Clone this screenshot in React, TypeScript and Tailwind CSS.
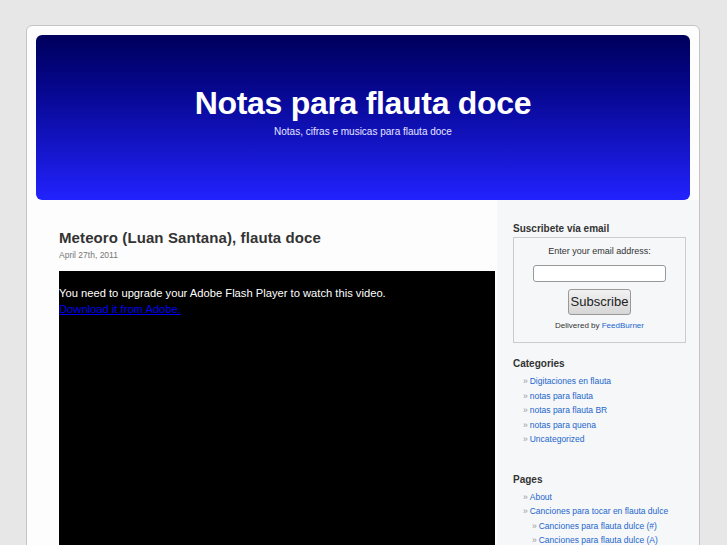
import React from "react";

const cats = ["Digitaciones en flauta", "notas para flauta", "notas para flauta BR", "notas para quena", "Uncategorized"];

export default function App() {
  return (
    <div className="h-[545px] bg-[#e7e7e7] pt-[25px] pl-[26px] overflow-hidden" style={{ fontFamily: '"Liberation Sans", Arial, sans-serif' }}>
      <div className="w-[674px] h-[560px] bg-[#fdfdfd] border border-[#c4c4c4] rounded-[6px] flex flex-col">
        <div className="mx-[9px] mt-[9px] h-[165px] rounded-[6px] bg-gradient-to-b from-[#00005c] to-[#2222ff] flex flex-col items-center">
          <div className="mt-[49px] text-white font-bold text-[32px] leading-[38px] tracking-[-0.3px]">Notas para flauta doce</div>
          <div className="mt-[4px] text-[#e6e6ff] text-[10px] leading-[12px]">Notas, cifras e musicas para flauta doce</div>
        </div>
        <div className="flex flex-1">
          <div className="w-[470px] pl-[32px] pt-[28px]">
            <div className="text-[#333] font-bold text-[15px] leading-[20px] tracking-[0.1px]">Meteoro (Luan Santana), flauta doce</div>
            <div className="text-[#777] text-[8.5px] leading-[10px] mt-[2px]">April 27th, 2011</div>
            <div className="mt-[11px] w-[436px] h-[300px] bg-black pt-[14px] text-[11.2px] leading-[16px]">
              <div className="text-white">You need to upgrade your Adobe Flash Player to watch this video.</div>
              <a className="text-[#0000ee] underline">Download it from Adobe.</a>
            </div>
          </div>
          <div className="flex-1 bg-[#f6f7f9] pl-[16px] pr-[13px] pt-[23px]">
            <div className="text-[#333] font-bold text-[10px] leading-[12px]">Suscribete vía email</div>
            <div className="mt-[2px] border border-[#cccccc] h-[106px] flex flex-col items-center pt-[7px]">
              <div className="text-[#333] text-[9px] leading-[12px]">Enter your email address:</div>
              <div className="mt-[8px] w-[133px] h-[17px] bg-white border border-[#999] rounded-[3px]" />
              <div className="mt-[7px] w-[63px] h-[26px] rounded-[3px] border border-[#999] bg-gradient-to-b from-[#f2f2f2] to-[#d6d6d6] flex items-center justify-center text-[13px] text-[#222]">Subscribe</div>
              <div className="mt-[6px] text-[8px] leading-[10px] text-[#333]">Delivered by <span className="text-[#2266cc]">FeedBurner</span></div>
            </div>
            <div className="mt-[15px] text-[#333] font-bold text-[10px] leading-[12px]">Categories</div>
            <ul className="mt-[4px] pl-[10px]">
              {cats.map((c) => (
                <li key={c} className="text-[8.5px] leading-[14.5px] text-[#2266cc]"><span className="text-[#999] mr-[2px]">»</span>{c}</li>
              ))}
            </ul>
            <div className="mt-[27px] text-[#333] font-bold text-[10px] leading-[12px]">Pages</div>
            <ul className="mt-[4px] pl-[10px]">
              <li className="text-[8.5px] leading-[14.5px] text-[#2266cc]"><span className="text-[#999] mr-[2px]">»</span>About</li>
              <li className="text-[8.5px] leading-[14.5px] text-[#2266cc]"><span className="text-[#999] mr-[2px]">»</span>Canciones para tocar en flauta dulce</li>
              <li className="pl-[9px] text-[8.5px] leading-[14.5px] text-[#2266cc]"><span className="text-[#999] mr-[2px]">»</span>Canciones para flauta dulce (#)</li>
              <li className="pl-[9px] text-[8.5px] leading-[14.5px] text-[#2266cc]"><span className="text-[#999] mr-[2px]">»</span>Canciones para flauta dulce (A)</li>
            </ul>
          </div>
        </div>
      </div>
    </div>
  );
}
